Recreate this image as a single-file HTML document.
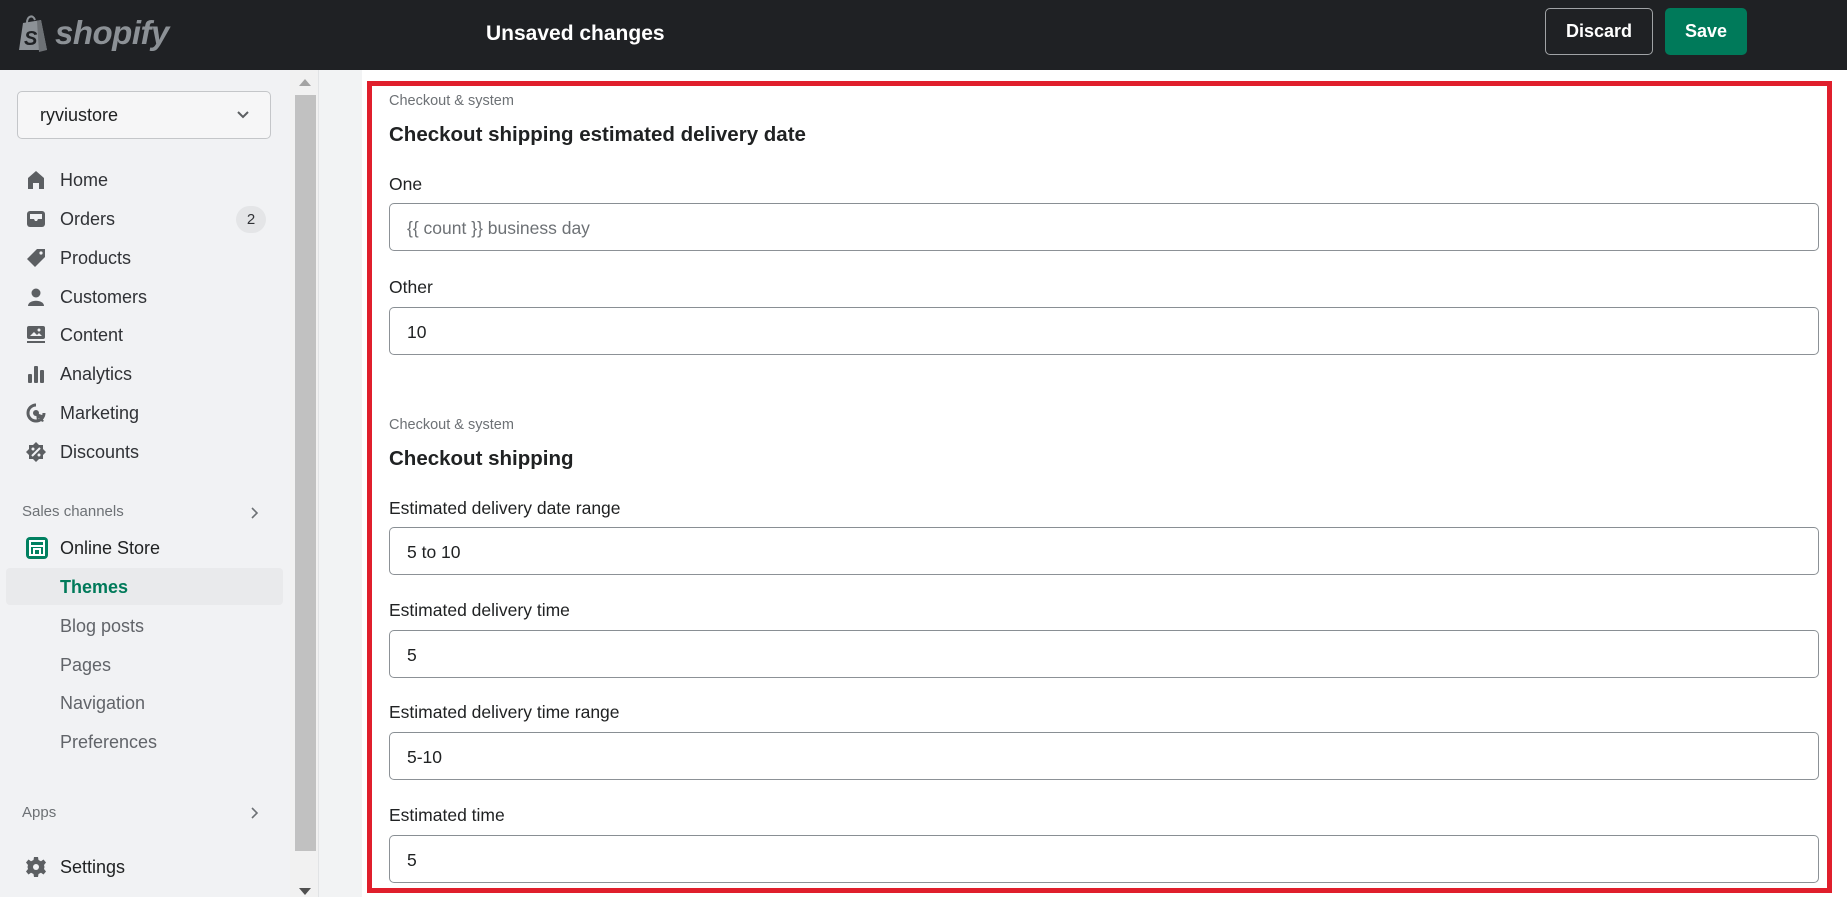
<!DOCTYPE html>
<html><head><meta charset="utf-8">
<style>
*{box-sizing:border-box;margin:0;padding:0}
html,body{width:1847px;height:897px;overflow:hidden;background:#f1f2f4;font-family:"Liberation Sans",sans-serif;color:#202223}
.top{position:absolute;left:0;top:0;width:1847px;height:70px;background:#1f2124}
.logo{position:absolute;left:17px;top:14px;display:flex;align-items:center}
.logo span{font-weight:bold;font-style:italic;font-size:33px;color:#8c9196;margin-left:6px;letter-spacing:-0.5px}
.title{position:absolute;left:486px;top:22px;color:#fff;font-size:21px;font-weight:bold}
.btn{position:absolute;top:8px;height:47px;border-radius:5px;color:#fff;font-weight:bold;font-size:18px;display:flex;align-items:center;justify-content:center}
.discard{left:1545px;width:108px;border:1px solid #a0a3a6}
.save{left:1665px;width:82px;background:#007a5a}
.side{position:absolute;left:0;top:70px;width:290px;height:827px;background:#f1f2f4}
.sel{position:absolute;left:17px;top:21px;width:254px;height:48px;border:1px solid #c4c6c9;border-radius:5px;background:#f6f6f7;font-size:18px;padding:13px 0 0 22px;color:#202223}
.sel svg{position:absolute;right:20px;top:18px}
.nav{position:absolute;left:0;font-size:18px;color:#303236;height:30px;display:flex;align-items:center}
.nav svg{position:absolute;left:26px}
.nav b{font-weight:normal;position:absolute;left:60px;white-space:nowrap}
.sub{position:absolute;left:60px;font-size:18px;color:#616469}
.sec{position:absolute;left:22px;font-size:15px;color:#6d7175}
.chev{position:absolute;left:250px}
.sb{position:absolute;left:290px;top:70px;width:28px;height:827px;background:#f1f1f1}
.thumb{position:absolute;left:5px;top:25px;width:21px;height:756px;background:#c1c1c1}
.vline{position:absolute;left:318px;top:70px;width:1px;height:827px;background:#e1e3e5}
.mainbg{position:absolute;left:319px;top:70px;width:43px;height:827px;background:#f2f3f4}
.panel{position:absolute;left:362px;top:70px;width:1485px;height:827px;background:#fff}
.red{position:absolute;left:367px;top:81px;width:1465px;height:812px;border:5px solid #e01f2c}
.small{position:absolute;left:389px;font-size:14.5px;color:#6d7175}
.h{position:absolute;left:389px;font-size:20.5px;font-weight:bold;color:#202223}
.lbl{position:absolute;left:389px;font-size:17.5px;color:#202223}
.inp{position:absolute;left:389px;width:1430px;height:48px;border:1px solid #8c9196;border-top-color:#898f94;border-radius:5px;font-size:17.5px;padding:14px 0 0 17px;color:#202223}
.ph{color:#6d7175}
</style></head><body>
<div class="top">
 <div class="logo">
  <svg width="32" height="38" viewBox="0 0 32 38"><path d="M6 9 L24 6 L30 36 L2 36 Z" fill="#8c9196"/><path d="M10 9 C10 2 16 0 18 6" stroke="#8c9196" stroke-width="2" fill="none"/><path d="M24 6 L30 36 L22 38 L20 7Z" fill="#6d7175"/><text x="7" y="31" font-family="Liberation Sans" font-weight="bold" font-style="italic" font-size="20" fill="#1f2124">S</text></svg>
  <span>shopify</span>
 </div>
 <div class="title">Unsaved changes</div>
 <div class="btn discard">Discard</div>
 <div class="btn save">Save</div>
</div>
<div class="side">
 <div class="sel">ryviustore<svg width="14" height="9" viewBox="0 0 14 9"><path d="M2 2 L7 7 L12 2" stroke="#5c5f62" stroke-width="2" fill="none"/></svg></div>
 <div class="nav" style="top:95px"><svg width="20" height="20" viewBox="0 0 20 20"><path d="M10 1 L18 8 V19 H13 V13 H7 V19 H2 V8 Z" fill="#5c5f62"/></svg><b>Home</b></div>
 <div class="nav" style="top:134px"><svg width="20" height="20" viewBox="0 0 20 20"><rect x="1" y="2" width="18" height="16" rx="3" fill="#5c5f62"/><path d="M4 5 H16 V10 H12 L11 12 H9 L8 10 H4Z" fill="#f1f2f4"/></svg><b>Orders</b><div style="position:absolute;left:236px;width:30px;height:27px;border-radius:14px;background:#e4e5e7;font-size:15px;text-align:center;line-height:27px;color:#303236">2</div></div>
 <div class="nav" style="top:173px"><svg width="20" height="20" viewBox="0 0 20 20"><path d="M11 1 H19 V9 L9 19 L1 11 Z" fill="#5c5f62"/><circle cx="15" cy="5" r="1.6" fill="#f1f2f4"/></svg><b>Products</b></div>
 <div class="nav" style="top:212px"><svg width="20" height="20" viewBox="0 0 20 20"><circle cx="10" cy="6" r="4.5" fill="#5c5f62"/><path d="M2 19 C2 12 18 12 18 19Z" fill="#5c5f62"/></svg><b>Customers</b></div>
 <div class="nav" style="top:250px"><svg width="20" height="20" viewBox="0 0 20 20"><rect x="1" y="1" width="18" height="13" rx="2" fill="#5c5f62"/><path d="M4 11 L8 7 L11 10 L13 8 L16 11Z" fill="#f1f2f4"/><circle cx="13" cy="5" r="1.5" fill="#f1f2f4"/><rect x="1" y="16" width="18" height="2" fill="#5c5f62"/></svg><b>Content</b></div>
 <div class="nav" style="top:289px"><svg width="20" height="20" viewBox="0 0 20 20"><rect x="2" y="10" width="4" height="9" rx="1" fill="#5c5f62"/><rect x="8" y="2" width="4" height="17" rx="1" fill="#5c5f62"/><rect x="14" y="6" width="4" height="13" rx="1" fill="#5c5f62"/></svg><b>Analytics</b></div>
 <div class="nav" style="top:328px"><svg width="20" height="20" viewBox="0 0 20 20"><path d="M10 2 A8 8 0 1 0 18 10" stroke="#5c5f62" stroke-width="3" fill="none"/><circle cx="10" cy="10" r="3" fill="#5c5f62"/><path d="M10 10 L19 13 L15 14 L18 18 L16 19 L13 15 L11 18Z" fill="#5c5f62"/></svg><b>Marketing</b></div>
 <div class="nav" style="top:367px"><svg width="20" height="20" viewBox="0 0 20 20"><path d="M10 0 L13 3 L17 3 L17 7 L20 10 L17 13 L17 17 L13 17 L10 20 L7 17 L3 17 L3 13 L0 10 L3 7 L3 3 L7 3Z" fill="#5c5f62"/><path d="M6 14 L14 6" stroke="#f1f2f4" stroke-width="2"/><circle cx="7" cy="7" r="1.5" fill="#f1f2f4"/><circle cx="13" cy="13" r="1.5" fill="#f1f2f4"/></svg><b>Discounts</b></div>
 <div class="sec" style="top:433px">Sales channels</div>
 <svg class="chev" style="top:436px" width="10" height="14" viewBox="0 0 10 14"><path d="M2 2 L7 7 L2 12" stroke="#6d7175" stroke-width="1.6" fill="none"/></svg>
 <div class="nav" style="top:463px"><svg width="22" height="22" viewBox="0 0 22 22"><rect width="22" height="22" rx="4" fill="#008060"/><rect x="4" y="4" width="14" height="14" fill="none" stroke="#fff" stroke-width="2"/><path d="M4 9 H18" stroke="#fff" stroke-width="2"/><rect x="8" y="12" width="6" height="6" fill="none" stroke="#fff" stroke-width="2"/></svg><b style="color:#202223">Online Store</b></div>
 <div style="position:absolute;left:6px;top:498px;width:277px;height:37px;background:#e9eaec;border-radius:4px"></div>
 <div class="sub" style="top:507px;color:#007a5a;font-weight:bold">Themes</div>
 <div class="sub" style="top:546px">Blog posts</div>
 <div class="sub" style="top:585px">Pages</div>
 <div class="sub" style="top:623px">Navigation</div>
 <div class="sub" style="top:662px">Preferences</div>
 <div class="sec" style="top:734px">Apps</div>
 <svg class="chev" style="top:736px" width="10" height="14" viewBox="0 0 10 14"><path d="M2 2 L7 7 L2 12" stroke="#6d7175" stroke-width="1.6" fill="none"/></svg>
 <div class="nav" style="top:782px"><svg width="20" height="20" viewBox="0 0 20 20"><path d="M8 0 H12 L12.5 3 L15 4.3 L17.5 2.5 L20 5.5 L18 8 L18.5 10 L18 12 L20 14.5 L17.5 17.5 L15 15.7 L12.5 17 L12 20 H8 L7.5 17 L5 15.7 L2.5 17.5 L0 14.5 L2 12 L1.5 10 L2 8 L0 5.5 L2.5 2.5 L5 4.3 L7.5 3Z" fill="#5c5f62"/><circle cx="10" cy="10" r="3" fill="#f1f2f4"/></svg><b style="color:#202223">Settings</b></div>
</div>
<div class="sb"><svg style="position:absolute;left:9px;top:9px" width="12" height="7"><path d="M0 7 L6 0 L12 7Z" fill="#a3a3a3"/></svg><div class="thumb"></div><svg style="position:absolute;left:9px;top:818px" width="12" height="7"><path d="M0 0 L6 7 L12 0Z" fill="#505050"/></svg></div>
<div class="vline"></div>
<div class="mainbg"></div>
<div class="panel"></div>
<div class="red"></div>
<div class="small" style="top:93px">Checkout &amp; system</div>
<div class="h" style="top:123px">Checkout shipping estimated delivery date</div>
<div class="lbl" style="top:174px">One</div>
<div class="inp" style="top:203px"><span class="ph">{{ count }} business day</span></div>
<div class="lbl" style="top:277px">Other</div>
<div class="inp" style="top:307px">10</div>
<div class="small" style="top:417px">Checkout &amp; system</div>
<div class="h" style="top:447px">Checkout shipping</div>
<div class="lbl" style="top:498px">Estimated delivery date range</div>
<div class="inp" style="top:527px">5 to 10</div>
<div class="lbl" style="top:600px">Estimated delivery time</div>
<div class="inp" style="top:630px">5</div>
<div class="lbl" style="top:702px">Estimated delivery time range</div>
<div class="inp" style="top:732px">5-10</div>
<div class="lbl" style="top:805px">Estimated time</div>
<div class="inp" style="top:835px">5</div>
</body></html>
